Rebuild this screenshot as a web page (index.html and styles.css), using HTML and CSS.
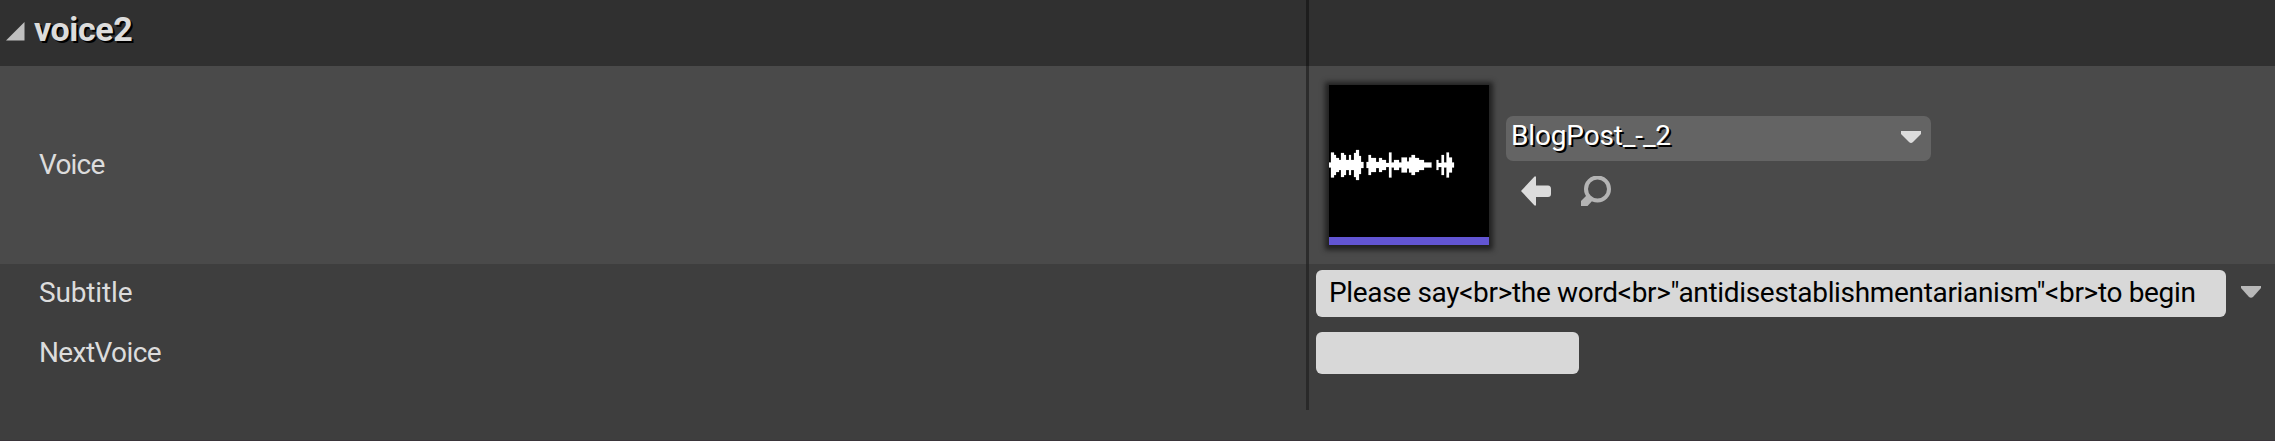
FILE: index.html
```html
<!DOCTYPE html>
<html lang="en">
<head>
<meta charset="utf-8">
<title>voice2</title>
<link rel="stylesheet" href="styles.css">
</head>
<body>
<main class="panel">
  <header class="row row-header">
    <div class="name name-header">
      <svg class="expander" width="19" height="19" viewBox="0 0 19 19"><path d="M18.500 0V18.500H0Z" fill="#bfbfbf"/></svg>
      <h1 class="title">voice2</h1>
    </div>
    <div class="value"></div>
  </header>
  <section class="row row-voice">
    <div class="name"><span class="label label-voice">Voice</span></div>
    <div class="value value-voice">
      <div class="thumb">
        <svg class="wave" width="160" height="152" viewBox="0 0 160 152">
          <g fill="#fff" stroke="#fff" stroke-opacity=".35" stroke-width=".6">
            <path d="M0 77.500H2V67.500H5V70H7V73H10V75H12V68H15V70H17V75H20V70H22V75H25V68H27V65H30V71H32V77H34.500V83H32V89H30V95H27V92H25V85H22V90H20V85H17V90H15V92H12V85H10V87H7V90H5V92.500H2V82.500H0Z"/>
            <path d="M37.500 77H39.500V70H42V73H47V77H50V73H53V75H57V85H53V87H50V83H47V87H42V90H39.500V83H37.500Z"/>
            <path d="M57 78H60V67.500H62.500V77.500H65V75H70V77.500H72.500V72.500H78V76.500H80V72.500H82.500V70H86V73H90V75H95V77.500H102.500V82.500H95V85H90V87H86V90H82.500V87.500H80V83.500H78V87.500H72.500V82.500H70V85H65V82.500H62.500V92.500H60V82H57Z"/>
            <path d="M107.500 75H109.500V78H112.500V70H115V77.500H117.500V67.500H120V72.500H123V77.500H125V82.500H123V87.500H120V92.500H117.500V82.500H115V90H112.500V82H109.500V85H107.500Z"/>
          </g>
        </svg>
      </div>
      <div class="asset">
        <div class="combo">
          <span class="combo-text">BlogPost_-_2</span>
          <svg class="combo-arrow" width="20" height="12" viewBox="0 0 20 12"><path d="M0 0H20V3L12 11Q10 13 8 11L0 3Z" fill="#dcdcdc"/></svg>
        </div>
        <div class="actions">
          <svg width="30" height="30" viewBox="0 0 30 30"><path d="M0 15L13.500 0.500H15V9.500H27Q30 9.500 30 13V18Q30 21 27 21H15V29.500H13.500Z" fill="#dcdcdc"/></svg>
          <svg width="30" height="30" viewBox="0 0 30 30"><circle cx="16.500" cy="13" r="11.500" fill="none" stroke="#b4b4b4" stroke-width="4"/><path d="M7 18L0 25V30H6.500L13 23Z" fill="#b4b4b4"/></svg>
        </div>
      </div>
    </div>
  </section>
  <section class="row row-subtitle">
    <div class="name"><span class="label label-subtitle">Subtitle</span></div>
    <div class="value value-subtitle">
      <div class="field field-wide"><span class="field-text">Please say&lt;br&gt;the word&lt;br&gt;"antidisestablishmentarianism"&lt;br&gt;to begin</span></div>
      <svg class="more" width="20" height="12" viewBox="0 0 20 12"><path d="M0 0H20V2L12 11Q10 12.500 8 11L0 2Z" fill="#b8b8b8"/></svg>
    </div>
  </section>
  <section class="row row-next">
    <div class="name"><span class="label label-next">NextVoice</span></div>
    <div class="value value-next"><div class="field field-short"></div></div>
  </section>
  <footer class="gap"></footer>
</main>
</body>
</html>
```

FILE: styles.css
```css
body { margin: 0; background: #3e3e3e; font-family: Roboto, sans-serif; font-size: 28px; color: #dcdcdc; }
.panel { height: 440px; border-bottom: 1px solid #3a353a; overflow: hidden; }
.row { display: flex; box-sizing: border-box; }
.row-header { height: 66px; background: #303030; }
.row-voice { height: 198px; background: #4a4a4a; }
.row-subtitle { height: 60px; }
.row-next { height: 86px; }
.gap { height: 30px; }
.name { box-sizing: border-box; width: 1306px; flex: none; padding-left: 39px; }
.name-header { display: flex; padding: 22px 0 0 6px; gap: 9px; }
.title { margin: -11px 0 0; font-size: 34px; line-height: 36px; font-weight: 700; letter-spacing: -0.4px; text-shadow: 2px 2px 0 #000; }
.label { display: block; line-height: 32px; padding-top: 13px; white-space: nowrap; }
.label-voice { padding-top: 83px; letter-spacing: -0.8px; }
.label-subtitle { letter-spacing: -0.15px; }
.label-next { letter-spacing: -0.6px; }
.value { box-sizing: border-box; flex: 1; display: flex; align-items: flex-start; border-left: 3px solid #292929; }
.row-header .value { border-color: #1d1d1d; }
.row-voice .value { border-color: #2c2c2c; }
.value-voice { padding: 19px 0 0 20px; gap: 17px; }
.thumb { width: 160px; height: 152px; background: #000; border-bottom: 8px solid #6255d3; box-shadow: 0 1px 5px 4px #222; }
.wave { display: block; }
.asset { padding-top: 31px; width: 425px; }
.combo { display: flex; justify-content: space-between; box-sizing: border-box; height: 45px; padding: 4px 10px 0 5px; border-radius: 7px; background: #646464; color: #fff; }
.combo-text { line-height: 32px; letter-spacing: -0.15px; text-shadow: 2px 2px 0 #000; }
.combo-arrow { margin-top: 11px; }
.actions { display: flex; gap: 30px; padding: 15px 0 0 15px; }
.actions svg { display: block; }
.value-subtitle { padding: 6px 0 0 7px; gap: 15px; }
.field { box-sizing: border-box; border-radius: 6px; background: #d8d8d8; color: #000; }
.field-wide { width: 910px; height: 47px; padding: 7px 0 0 13px; }
.field-text { display: block; line-height: 32px; letter-spacing: -0.33px; white-space: nowrap; }
.more { margin-top: 16px; }
.value-next { padding: 8px 0 0 7px; }
.field-short { width: 263px; height: 42px; }
```
